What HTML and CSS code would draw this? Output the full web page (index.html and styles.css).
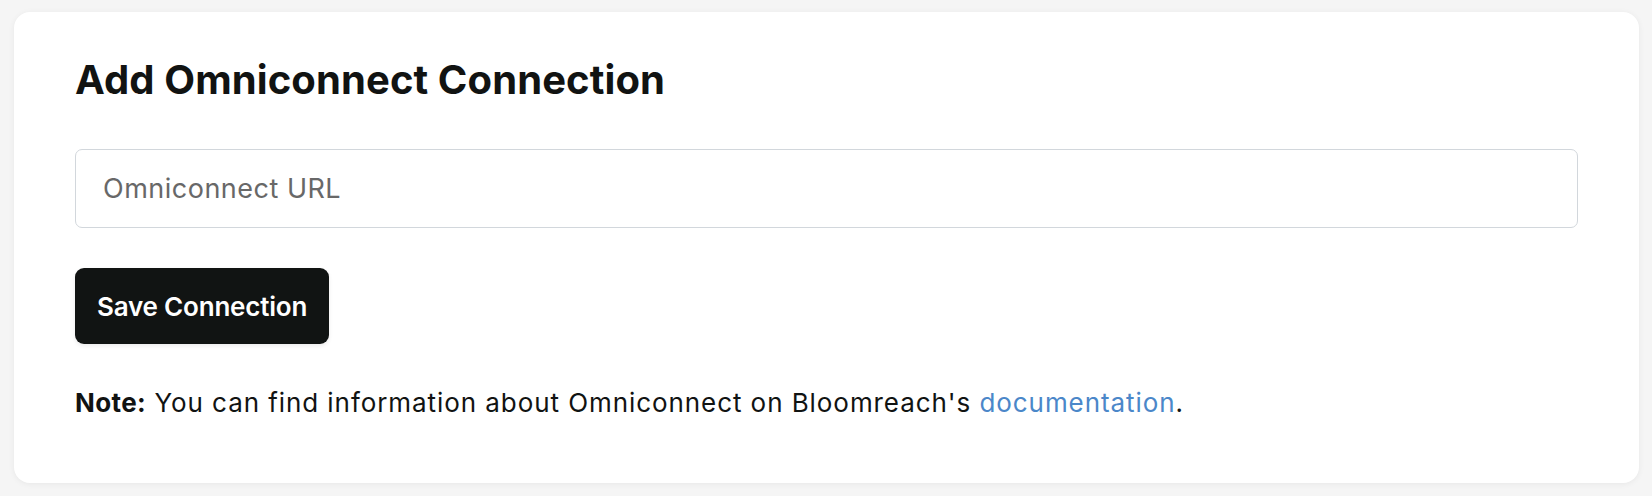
FILE: index.html
```html
<!DOCTYPE html>
<html lang="en">
<head>
<meta charset="utf-8">
<title>Add Omniconnect Connection</title>
<link rel="stylesheet" href="styles.css">
</head>
<body>
  <main class="card">
    <h1 class="title">Add Omniconnect Connection</h1>
    <input class="url-input" type="text" placeholder="Omniconnect URL">
    <div class="actions">
      <button class="btn-save" type="button">Save Connection</button>
    </div>
    <p class="note"><strong>Note:</strong> You can find information about Omniconnect on Bloomreach's <a class="link" href="#">documentation</a>.</p>
  </main>
</body>
</html>
```

FILE: styles.css
```css
* { box-sizing: border-box; }

html, body {
  margin: 0;
  height: 100%;
}

body {
  background: #f5f5f5;
  padding: 12px 13px 13px 14px;
  font-family: Inter, "Noto Sans", "Liberation Sans", sans-serif;
  color: #111312;
}

.card {
  background: #ffffff;
  border-radius: 16px;
  box-shadow: 0 1px 6px rgba(0, 0, 0, 0.06);
  height: 471px;
  padding: 44px 61px 0 61px;
  display: flex;
  flex-direction: column;
}

.title {
  margin: 0;
  font-size: 40px;
  line-height: 48px;
  font-weight: 700;
  color: #111312;
  letter-spacing: 0.1px;
}

.url-input {
  margin-top: 45px;
  height: 79px;
  width: 100%;
  border: 1.5px solid #d2d7dc;
  border-radius: 7px;
  padding: 0 27px;
  font-family: inherit;
  font-size: 27px;
  letter-spacing: 0.5px;
  color: #111312;
  background: #fff;
  outline: none;
}

.url-input::placeholder {
  color: #686868;
}

.actions {
  margin-top: 40px;
  display: flex;
}

.btn-save {
  height: 76px;
  padding: 0 22px;
  border: none;
  border-radius: 9px;
  background: #111413;
  color: #ffffff;
  font-family: inherit;
  font-size: 26px;
  font-weight: 600;
  letter-spacing: -0.2px;
  box-shadow: 0 2px 4px rgba(0, 0, 0, 0.08);
  cursor: pointer;
}

.note {
  margin: 41px 0 0 0;
  font-size: 26px;
  line-height: 36px;
  letter-spacing: 0.93px;
  color: #111312;
}

.note strong {
  font-weight: 700;
  letter-spacing: 0.4px;
}

.link {
  color: #4b87c9;
  text-decoration: none;
}
```
